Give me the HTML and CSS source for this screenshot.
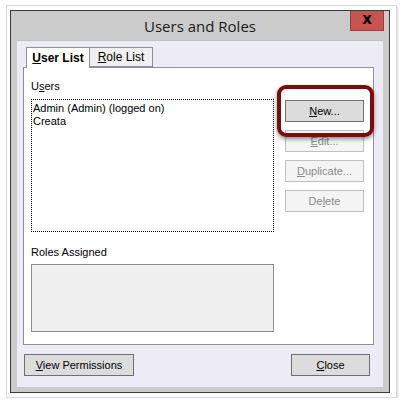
FILE: index.html
```html
<!DOCTYPE html>
<html lang="en">
<head>
    <meta charset="UTF-8">
    <meta name="viewport" content="width=device-width, initial-scale=1.0">
    <title>Users and Roles</title>
    <link rel="stylesheet" href="styles.css">
</head>
<body>

<div class="backdrop">
    <div class="dialog">
        <div class="titlebar">
            <span></span>
            <span class="title">Users and Roles</span>
            <span class="close-x">x</span>
        </div>

        <div class="client">
            <div class="tabs">
                <div class="tab active"><u>U</u>ser List</div>
                <div class="tab"><u>R</u>ole List</div>
            </div>

            <div class="panel">
                <div class="left-col">
                    <div class="label">U<u>s</u>ers</div>
                    <div class="listbox">
                        <div>Admin (Admin) (logged on)</div>
                        <div>Creata</div>
                    </div>
                    <div class="label roles-label">Roles Assigned</div>
                    <div class="roles-box"></div>
                </div>

                <div class="right-col">
                    <div class="button"><u>N</u>ew...</div>
                    <div class="button disabled"><u>E</u>dit...</div>
                    <div class="button disabled"><u>D</u>uplicate...</div>
                    <div class="button disabled">De<u>l</u>ete</div>
                    <!-- annotation round the New button -->
                    <div class="highlight"></div>
                </div>
            </div>

            <div class="bottom-row">
                <div class="button wide"><u>V</u>iew Permissions</div>
                <div class="button close-btn"><u>C</u>lose</div>
            </div>
        </div>
    </div>
</div>

</body>
</html>
```

FILE: styles.css
```css
body {
    margin: 0;
    padding: 0;
    background-color: #ffffff;
    font-family: 'Liberation Sans', Arial, sans-serif;
    font-size: 11px;
    color: #000;
}
.backdrop {
    width: 391px;
    height: 393px;
    box-sizing: border-box;
    margin: 5px 0 0 6px;
    padding: 4px 0 0 3px;
    border: 1px solid #d6d9dd;
    background-color: #ffffff;
    box-shadow: 1px 1px 2px rgba(0, 0, 0, 0.15);
}
.dialog {
    width: 380px;
    height: 383px;
    box-sizing: border-box;
    border: 1px solid #3b3b3b;
    background-color: #cbcbcb;
    display: flex;
    flex-direction: column;
}
.titlebar {
    height: 29px;
    display: grid;
    grid-template-columns: 1fr auto 1fr;
}
.title {
    font-family: 'Open Sans', 'Noto Sans', sans-serif;
    font-size: 15px;
    color: #1a1a1a;
    align-self: center;
    margin-top: 1px;
}
.close-x {
    justify-self: end;
    align-self: start;
    width: 34px;
    height: 20px;
    box-sizing: border-box;
    margin-right: 5px;
    background-color: #c75450;
    border: 1px solid #9a3f3c;
    border-top: none;
    color: #000;
    font-family: 'DejaVu Sans', sans-serif;
    font-weight: bold;
    font-size: 15px;
    line-height: 16px;
    text-align: center;
}
.client {
    flex: 1;
    margin: 0 6px 5px 6px;
    padding: 7px 9px 10px 6px;
    background-color: #edebf5;
    box-shadow: inset 0 1px 0 #b8c3d0;
}
.tabs {
    display: flex;
    margin-left: 3px;
    height: 20px;
    align-items: flex-start;
}
.tab {
    width: 63px;
    height: 20px;
    box-sizing: border-box;
    border: 1px solid #8c8f99;
    border-left: none;
    background-color: #f0f0f0;
    padding-top: 2px;
    text-align: center;
    font-size: 12px;
}
.tab.active {
    position: relative;
    width: 64px;
    height: 21px;
    border-left: 1px solid #8c8f99;
    border-bottom: none;
    background-color: #ffffff;
    font-weight: bold;
    padding-top: 3px;
}
.panel {
    width: 351px;
    height: 278px;
    box-sizing: border-box;
    border: 1px solid #8c8f99;
    background-color: #ffffff;
    padding: 11px 8px 0 7px;
    display: flex;
    gap: 11px;
}
.left-col {
    width: 243px;
    display: flex;
    flex-direction: column;
}
.label {
    height: 14px;
    line-height: 14px;
    margin-bottom: 6px;
}
.roles-label {
    margin-bottom: 5px;
}
.listbox {
    height: 133px;
    box-sizing: border-box;
    border: 1px dotted #000;
    padding: 2px 1px;
    line-height: 13px;
    margin-bottom: 13px;
}
.roles-box {
    height: 68px;
    box-sizing: border-box;
    border: 1px solid #8c8c8c;
    background-color: #f0f0f0;
}
.right-col {
    position: relative;
    width: 79px;
    padding-top: 21px;
    display: flex;
    flex-direction: column;
    gap: 8px;
}
.button {
    width: 79px;
    height: 22px;
    box-sizing: border-box;
    border: 1px solid #707070;
    background-color: #dcdcdc;
    text-align: center;
    line-height: 20px;
}
.button.disabled {
    border-color: #c0c0c0;
    background-color: #f4f4f4;
    color: #8a8a8a;
}
.highlight {
    position: absolute;
    left: -8px;
    top: 6px;
    width: 97px;
    height: 52px;
    box-sizing: border-box;
    border: 4px solid #7d0d0d;
    border-radius: 9px;
    box-shadow: 0 2px 4px rgba(0, 0, 0, 0.45);
}
.bottom-row {
    margin-top: 9px;
    display: flex;
    justify-content: space-between;
    padding: 0 4px 0 1px;
}
.button.wide {
    width: 110px;
}
```
